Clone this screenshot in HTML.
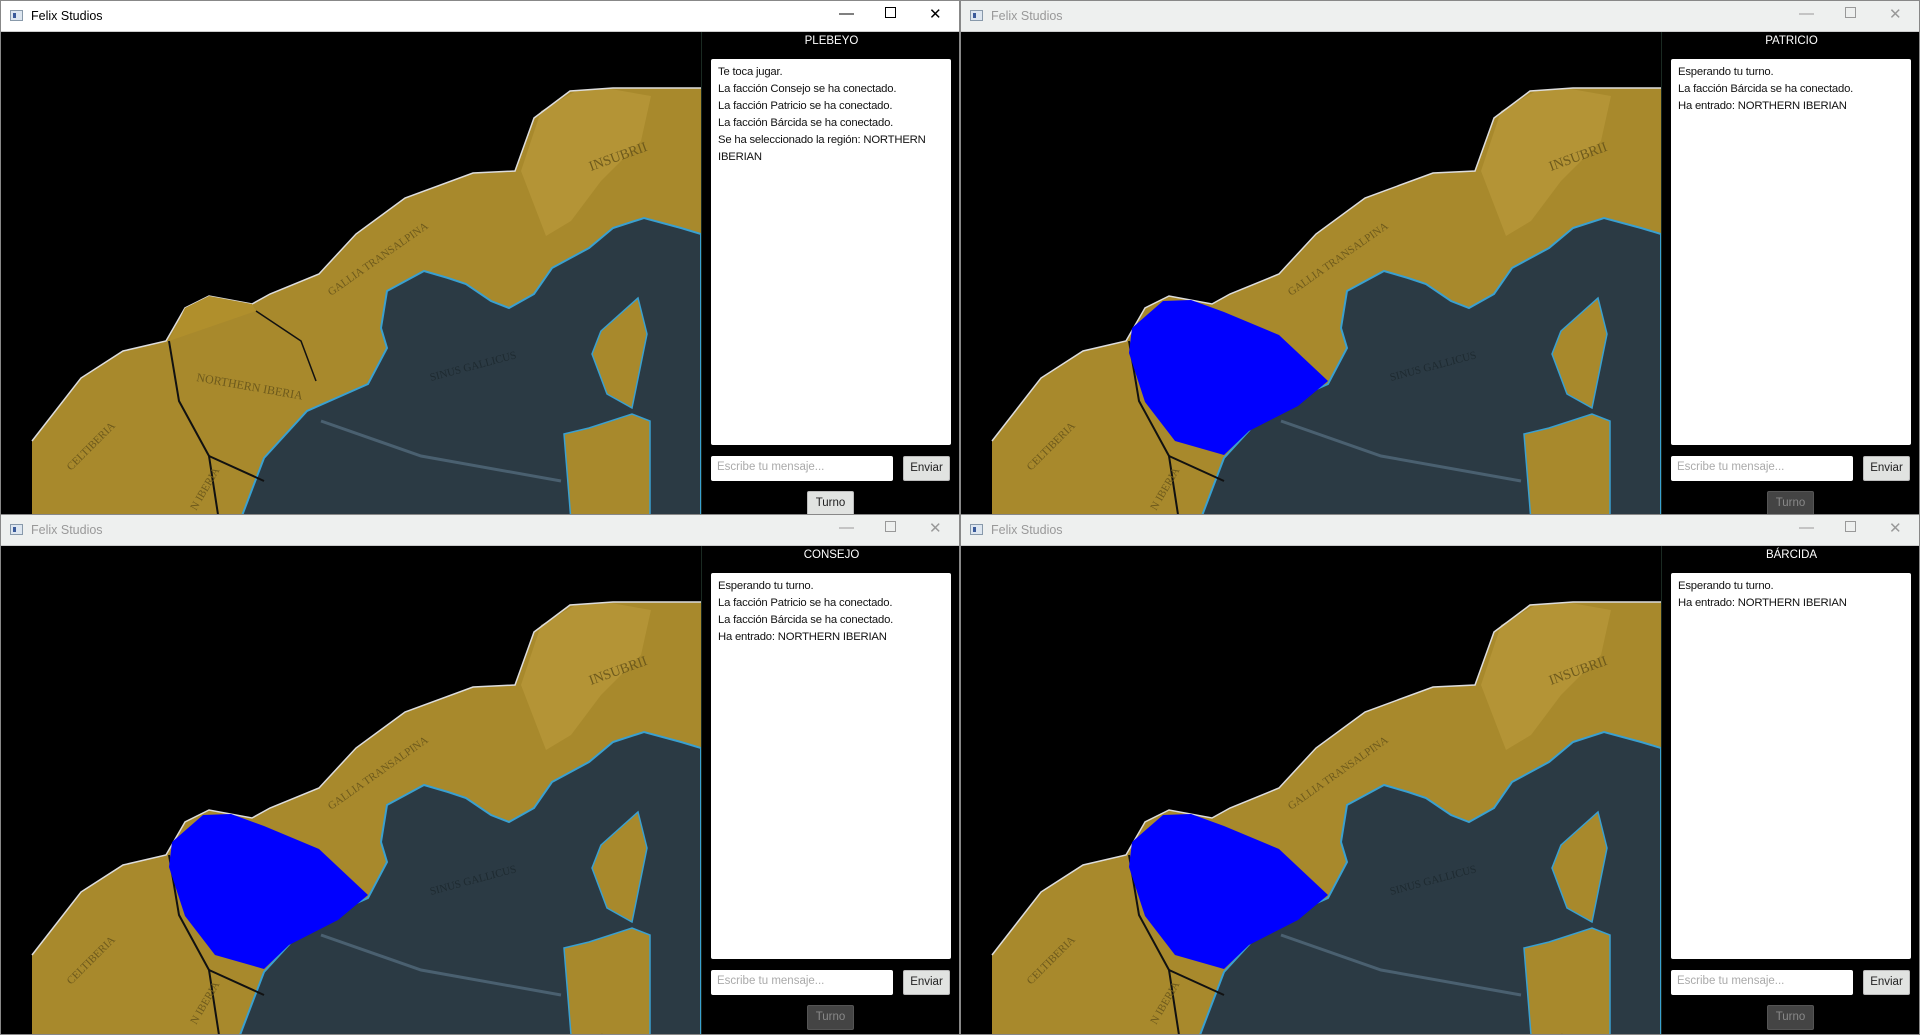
<!DOCTYPE html>
<html><head><meta charset="utf-8"><style>
*{margin:0;padding:0;box-sizing:border-box}
body{width:1920px;height:1035px;background:#6b7b86;position:relative;overflow:hidden;font-family:"Liberation Sans",sans-serif}
.win{position:absolute;width:960px;background:#000;overflow:hidden;border:1px solid #888}
.tb{position:absolute;left:0;top:0;right:0;height:31px;background:#fff;border-bottom:1px solid #ccc}
.tb .ic{position:absolute;left:9px;top:9px;width:13px;height:11px;border:1px solid #8899aa;background:#dde6f0}
.tb .ic:after{content:"";position:absolute;left:2px;top:2px;width:3px;height:5px;background:#3a5a9a}
.tb .t{position:absolute;left:30px;top:8px;font-size:12.5px;color:#000}
.tb .b{position:absolute;top:4px;font-size:15px;color:#000}
.inact .tb{background:#eef0ef}
.inact .tb .t,.inact .tb .b{color:#999}
.map{position:absolute;left:0;top:31px;width:700px;bottom:0;overflow:hidden}
.map svg{position:absolute;left:0;top:-31px}
.pn{position:absolute;left:700px;top:31px;width:260px;bottom:0;background:#000;border-left:1px solid #1a2a22}
.fac{position:absolute;top:3px;width:100%;text-align:center;color:#fff;font-size:11.5px}
.log{position:absolute;left:9px;top:27px;width:240px;height:386px;background:#fff;border-radius:2px;padding:5px 7px;font-size:11.3px;line-height:17px;color:#111;letter-spacing:-0.2px}
.in{position:absolute;left:9px;top:424px;width:182px;height:25px;background:#fff;border-radius:2px;font-size:11.5px;color:#aaa;padding:5px 6px}
.en{position:absolute;left:201px;top:424px;width:47px;height:25px;background:#e1e3e1;border:1px solid #bbb;border-radius:2px;font-size:11.5px;color:#222;text-align:center;padding-top:5px}
.tu{position:absolute;left:105px;top:459px;width:47px;height:25px;background:#e1e3e1;border:1px solid #bbb;border-radius:2px;font-size:11.5px;color:#222;text-align:center;padding-top:5px}
.inact .tu{background:#444;border-color:#555;color:#888}
</style></head><body>
<svg width="0" height="0" style="position:absolute">
<defs>
<symbol id="m" viewBox="0 0 700 520">
<polygon fill="#a8892c" points="31,520 31,440 80,377 122,350 165,340 184,307 208,295 251,303 269,293 318,273 355,233 404,197 472,172 514,170 533,117 569,90 612,87 700,87 700,520"/>
<polygon fill="#c0a040" opacity=".5" points="520,170 540,110 575,90 610,88 650,95 640,140 600,180 570,220 545,235"/>
<polyline fill="none" stroke="#ddd" stroke-width="1.5" points="31,440 80,377 122,350 165,340 184,307 208,295 251,303 269,293 318,273 355,233 404,197 472,172 514,170 533,117 569,90 612,87 700,87"/>
<polygon fill="#2b3a44" stroke="#3aa0d0" stroke-width="2" points="239,520 263,457 306,410 367,383 386,347 380,327 386,290 423,270 447,277 465,283 490,300 508,307 533,293 551,267 588,247 612,227 643,217 680,227 700,233 700,520"/>
<polygon fill="#a8892c" stroke="#3aa0d0" stroke-width="1.5" points="600,330 637,297 646,333 631,407 606,393 591,353"/>
<polygon fill="#a8892c" stroke="#3aa0d0" stroke-width="1.5" points="570,520 563,433 588,427 631,413 649,420 649,520"/>
<polyline fill="none" stroke="#111" stroke-width="2" points="168,340 178,400 208,455 218,520"/>
<polyline fill="none" stroke="#111" stroke-width="2" points="208,455 263,480"/>
<polyline fill="none" stroke="#111" stroke-width="1.5" points="255,310 300,340 315,380"/>
<polyline fill="none" stroke="#4a6070" stroke-width="3" points="320,420 420,455 560,480"/>
<g font-family="Liberation Serif,serif" font-size="11" fill="#6e5a1c">
<text x="590" y="170" transform="rotate(-20 590 170)" font-size="14">INSUBRII</text>
<text x="330" y="295" transform="rotate(-35 330 295)">GALLIA TRANSALPINA</text>
<text x="430" y="380" transform="rotate(-15 430 380)" fill="#1e2a30">SINUS GALLICUS</text>
<text x="70" y="470" transform="rotate(-45 70 470)">CELTIBERIA</text>
<text x="195" y="510" transform="rotate(-60 195 510)">N IBERIA</text>
<text x="595" y="520" transform="rotate(70 595 520)">SARDINIA</text>
</g>
</symbol>
</defs></svg>

<div class="win" style="left:0;top:0;height:516px">
<div class="tb"><div class="ic"></div><div class="t">Felix Studios</div><div class="b" style="left:838px">&#8212;</div><div class="b" style="left:884px;top:6px;width:11px;height:11px;border:1px solid #000"></div><div class="b" style="left:928px">&#10005;</div></div>
<div class="map"><svg width="700" height="520"><use href="#m"/><polygon fill="#b08f2c" points="168,340 184,307 208,295 251,303 255,310"/><text x="195" y="380" transform="rotate(10 195 380)" font-family="Liberation Serif,serif" font-size="12" fill="#6e5a1c">NORTHERN IBERIA</text></svg></div>
<div class="pn"><div class="fac">PLEBEYO</div>
<div class="log">Te toca jugar.<br>La facción Consejo se ha conectado.<br>La facción Patricio se ha conectado.<br>La facción Bárcida se ha conectado.<br>Se ha seleccionado la región: NORTHERN IBERIAN</div>
<div class="in">Escribe tu mensaje...</div><div class="en">Enviar</div><div class="tu">Turno</div></div>
</div>

<div class="win inact" style="left:960px;top:0;height:516px">
<div class="tb"><div class="ic"></div><div class="t">Felix Studios</div><div class="b" style="left:838px">&#8212;</div><div class="b" style="left:884px;top:6px;width:11px;height:11px;border:1px solid #999"></div><div class="b" style="left:928px">&#10005;</div></div>
<div class="map"><svg width="700" height="520"><use href="#m"/><polygon fill="#0000ff" points="171,327 202,300 230,299 263,311 318,334 367,380 337,405 288,430 263,454 214,440 184,401 168,352"/></svg></div>
<div class="pn"><div class="fac">PATRICIO</div>
<div class="log">Esperando tu turno.<br>La facción Bárcida se ha conectado.<br>Ha entrado: NORTHERN IBERIAN</div>
<div class="in">Escribe tu mensaje...</div><div class="en">Enviar</div><div class="tu">Turno</div></div>
</div>

<div class="win inact" style="left:0;top:514px;height:521px">
<div class="tb"><div class="ic"></div><div class="t">Felix Studios</div><div class="b" style="left:838px">&#8212;</div><div class="b" style="left:884px;top:6px;width:11px;height:11px;border:1px solid #999"></div><div class="b" style="left:928px">&#10005;</div></div>
<div class="map"><svg width="700" height="520"><use href="#m"/><polygon fill="#0000ff" points="171,327 202,300 230,299 263,311 318,334 367,380 337,405 288,430 263,454 214,440 184,401 168,352"/></svg></div>
<div class="pn"><div class="fac">CONSEJO</div>
<div class="log">Esperando tu turno.<br>La facción Patricio se ha conectado.<br>La facción Bárcida se ha conectado.<br>Ha entrado: NORTHERN IBERIAN</div>
<div class="in">Escribe tu mensaje...</div><div class="en">Enviar</div><div class="tu">Turno</div></div>
</div>

<div class="win inact" style="left:960px;top:514px;height:521px">
<div class="tb"><div class="ic"></div><div class="t">Felix Studios</div><div class="b" style="left:838px">&#8212;</div><div class="b" style="left:884px;top:6px;width:11px;height:11px;border:1px solid #999"></div><div class="b" style="left:928px">&#10005;</div></div>
<div class="map"><svg width="700" height="520"><use href="#m"/><polygon fill="#0000ff" points="171,327 202,300 230,299 263,311 318,334 367,380 337,405 288,430 263,454 214,440 184,401 168,352"/></svg></div>
<div class="pn"><div class="fac">BÁRCIDA</div>
<div class="log">Esperando tu turno.<br>Ha entrado: NORTHERN IBERIAN</div>
<div class="in">Escribe tu mensaje...</div><div class="en">Enviar</div><div class="tu">Turno</div></div>
</div>
</body></html>
